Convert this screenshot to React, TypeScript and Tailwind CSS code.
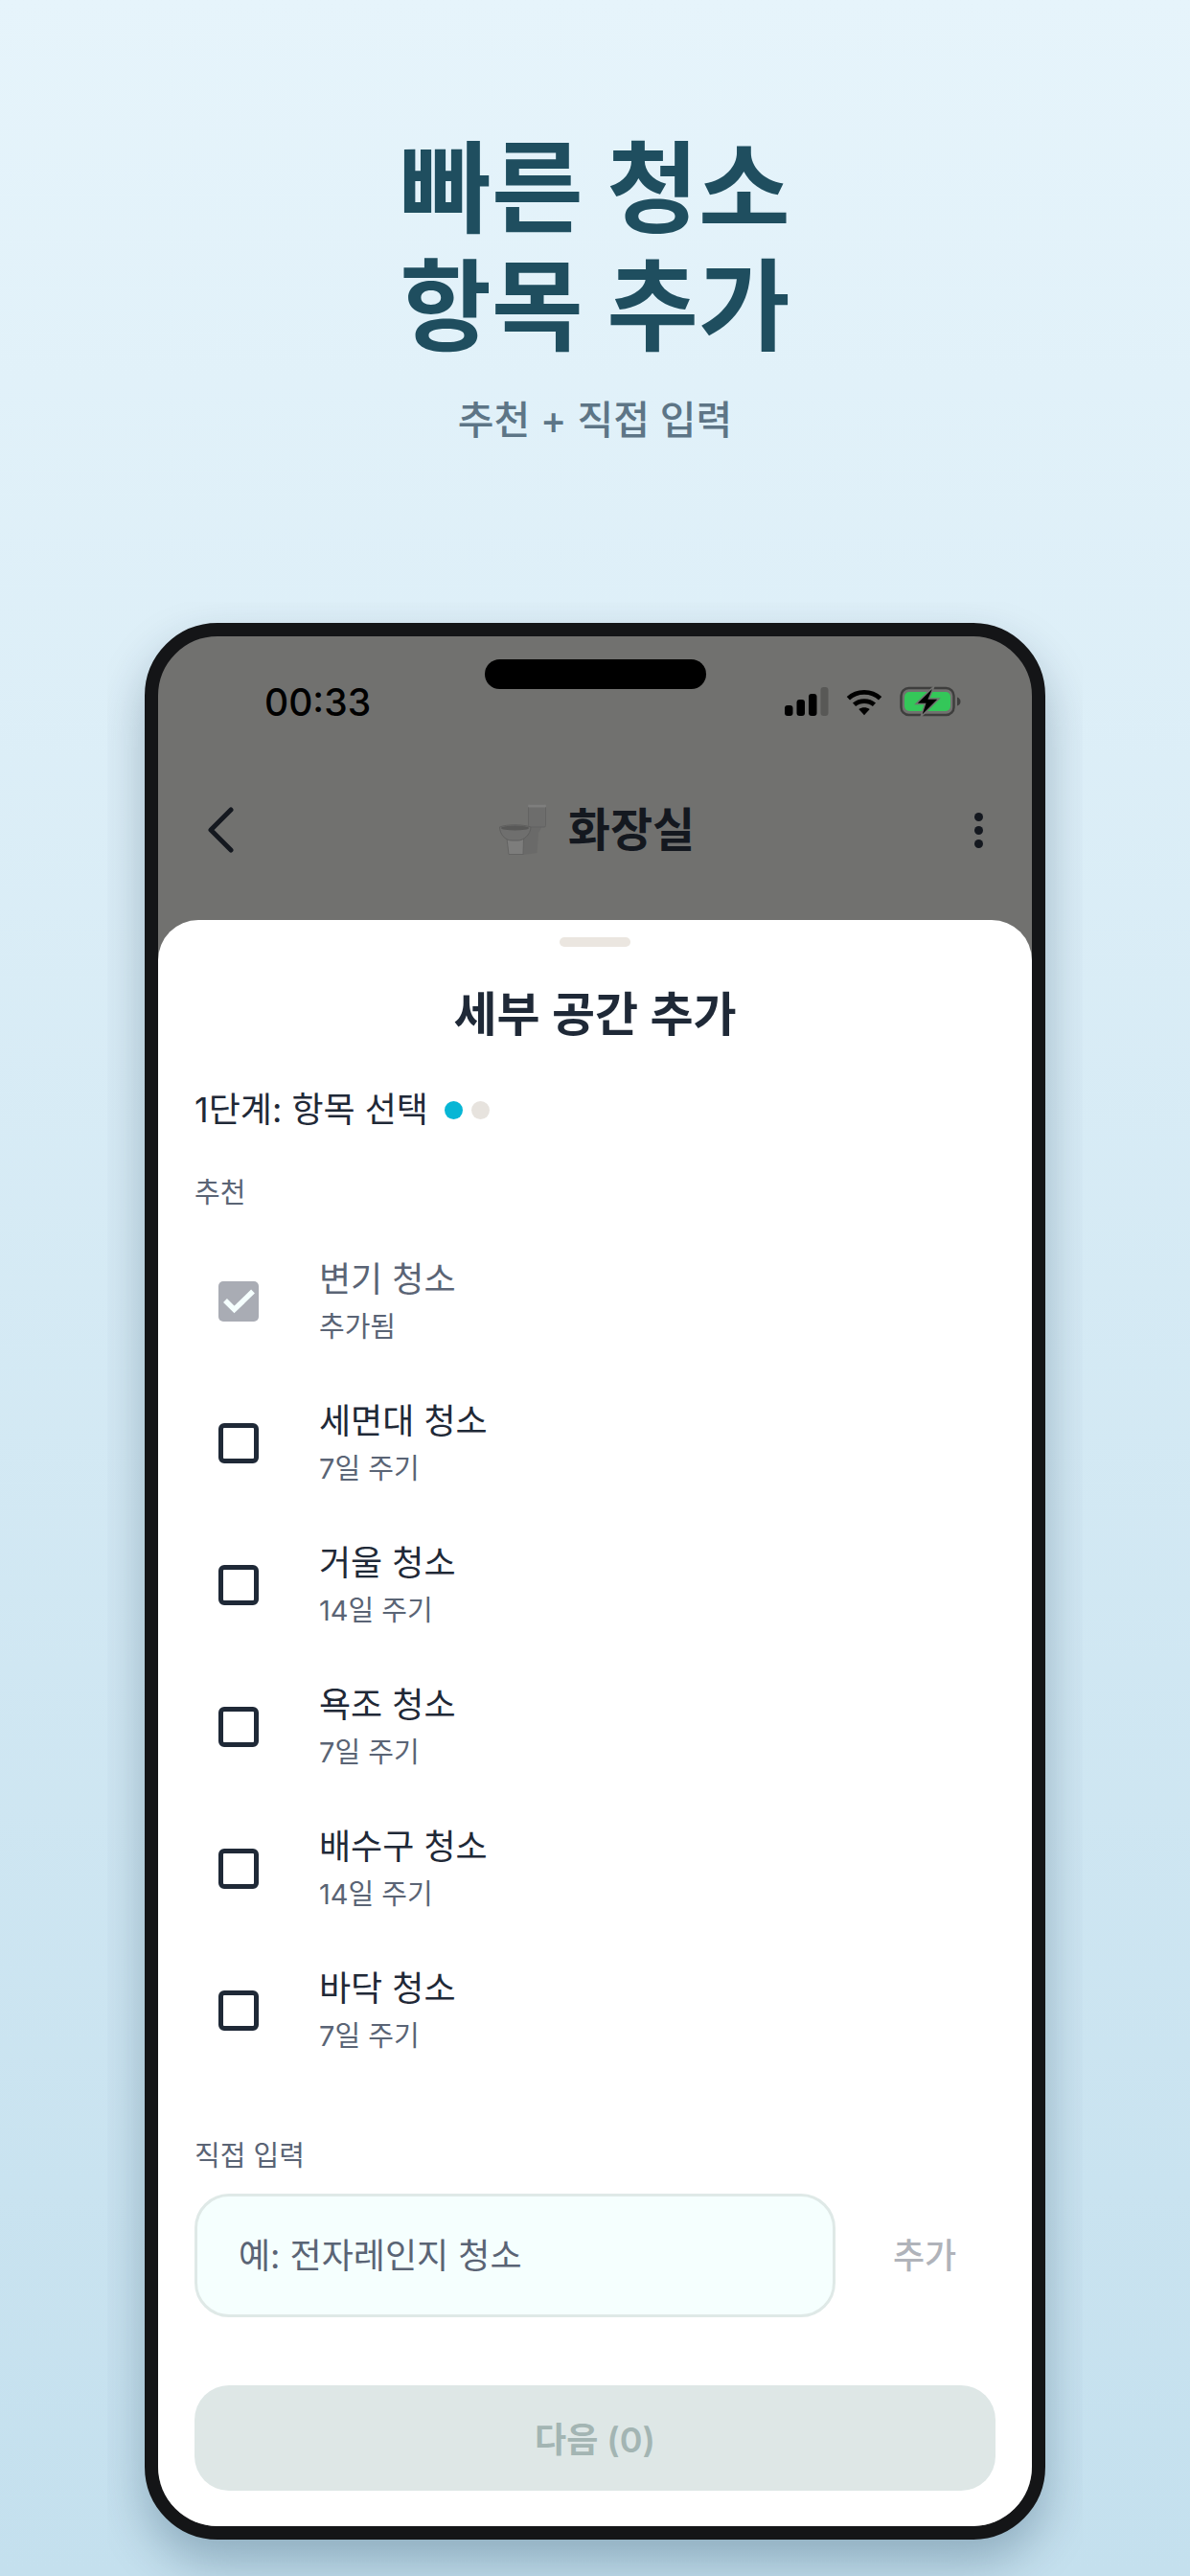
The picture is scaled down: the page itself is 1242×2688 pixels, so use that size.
const KR = "font-['Inter','Noto_Sans_CJK_KR',sans-serif]";

const items = [
  { name: '변기 청소', sub: '추가됨', added: true },
  { name: '세면대 청소', sub: '7일 주기' },
  { name: '거울 청소', sub: '14일 주기' },
  { name: '욕조 청소', sub: '7일 주기' },
  { name: '배수구 청소', sub: '14일 주기' },
  { name: '바닥 청소', sub: '7일 주기' },
];

function StatusIcons() {
  return (
    <div className="flex items-center gap-[18px]">
      <svg width="46" height="30" viewBox="0 0 46 30">
        <rect x="0" y="19" width="8.5" height="11" rx="3" fill="#000" />
        <rect x="12.5" y="13" width="8.5" height="17" rx="3" fill="#000" />
        <rect x="25" y="7" width="8.5" height="23" rx="3" fill="#000" />
        <rect x="37.5" y="0" width="8" height="30" rx="3" fill="#000" fillOpacity="0.22" />
      </svg>
      <svg width="38" height="30" viewBox="0 0 40 30" fill="none">
        <path d="M2.5 11.5C12 2.5 28 2.5 37.5 11.5" stroke="#000" strokeWidth="5" />
        <path d="M9 18.5C15 13.2 25 13.2 31 18.5" stroke="#000" strokeWidth="5" />
        <path d="M14 23.5C17.5 20.8 22.5 20.8 26 23.5L20 30Z" fill="#000" />
      </svg>
      <svg width="64" height="32" viewBox="0 0 64 32" fill="none">
        <rect x="1.5" y="2" width="55" height="28" rx="8" stroke="#000" strokeOpacity="0.45" strokeWidth="2.5" />
        <rect x="5" y="6" width="48" height="20" rx="5" fill="#34c759" />
        <path d="M60 11.5C62.5 12.5 63.5 14 63.5 16S62.5 19.5 60 20.5Z" fill="#000" fillOpacity="0.45" />
        <path d="M36 0L17 18.5H26.5L22 32L41 13H30.5Z" fill="#000" stroke="#71716f" strokeWidth="1.5" />
      </svg>
    </div>
  );
}

function ToiletEmoji() {
  return (
    <svg width="50" height="54" viewBox="0 0 50 54">
      <path d="M24 28L32 23H45L41 30L39.5 51L25 53Z" fill="#6a6a69" />
      <rect x="30.5" y="1" width="18" height="23" rx="1.5" fill="#6d6d6c" stroke="#636362" strokeWidth="1" />
      <rect x="30" y="0.5" width="19" height="3" rx="1" fill="#7e7e7d" />
      <path d="M8 36H25.5L25 52.5H10Z" fill="#7d7d7c" stroke="#636362" strokeWidth="1" />
      <path d="M0.5 24C8 21 24 21 33 24C33 32 25 38 20 38H13C6 38 0.5 31 0.5 24Z" fill="#6f6f6e" stroke="#5f5f5e" strokeWidth="1" />
      <ellipse cx="16.5" cy="25" rx="14.5" ry="2.6" fill="#585857" />
    </svg>
  );
}

function Check({ added }: { added?: boolean }) {
  if (added) {
    return (
      <div className="w-[42px] h-[42px] rounded-[5px] bg-[#a9acb4]">
        <svg width="42" height="42" viewBox="0 0 42 42" fill="none">
          <path d="M7 20L16.5 29.5L36 10.5" stroke="#f5fffe" strokeWidth="5.5" />
        </svg>
      </div>
    );
  }
  return <div className="w-[42px] h-[42px] rounded-[6px] border-[5px] border-[#1f2937]" />;
}

export default function App() {
  return (
    <div className={`w-[1242px] h-[2688px] flex flex-col items-center overflow-hidden bg-gradient-to-b from-[#e6f4fb] to-[#c4e0ee] ${KR}`}>
      <header className="h-[628px] pt-[136px] flex flex-col items-center shrink-0">
        <h1 className="text-[104px] leading-[123px] font-bold text-[#1f4e5f] text-center">
          빠른 청소
          <br />
          항목 추가
        </h1>
        <p className="mt-[26px] text-[41px] leading-[60px] font-medium text-[#5d7586]">추천 + 직접 입력</p>
      </header>

      <div className="w-[1018px] flex-1 overflow-hidden flex justify-center pt-[22px]">
        <div className="w-[940px] h-[2000px] shrink-0 rounded-[76px] border-[14px] border-[#141517] bg-[#71716f] shadow-[0_24px_50px_rgba(0,40,70,0.28)] overflow-hidden flex flex-col">
          <div className="relative h-[296px] shrink-0">
            <div className="absolute top-[24px] left-[341px] w-[231px] h-[31px] rounded-full bg-black" />
            <div className="h-[72px] mt-[32px] pl-[111px] pr-[74px] flex items-center justify-between">
              <span className="text-[39px] leading-none font-medium text-black">00:33</span>
              <StatusIcons />
            </div>
            <div className="mt-[58px] pl-[50px] pr-[40px] h-[80px] flex items-center justify-between">
              <svg width="30" height="48" viewBox="0 0 30 48" fill="none">
                <path d="M26 3L5 24L26 45" stroke="#14181f" strokeWidth="5" strokeLinecap="round" strokeLinejoin="round" />
              </svg>
              <div className="mr-[6px] flex items-center gap-[22px]">
                <ToiletEmoji />
                <span className="text-[48px] leading-none font-semibold text-[#14181f]">화장실</span>
              </div>
              <div className="w-[30px] flex flex-col items-center gap-[5px]">
                <i className="w-[9px] h-[9px] rounded-full bg-[#14181f]" />
                <i className="w-[9px] h-[9px] rounded-full bg-[#14181f]" />
                <i className="w-[9px] h-[9px] rounded-full bg-[#14181f]" />
              </div>
            </div>
          </div>

          <div className="flex-1 bg-white rounded-t-[42px] px-[38px] flex flex-col">
            <div className="mt-[18px] mx-auto w-[74px] h-[10px] rounded-full bg-[#ebe6e0] shrink-0" />
            <h2 className="mt-[41px] h-[60px] leading-[60px] text-[49px] font-semibold text-[#1f2937] text-center">세부 공간 추가</h2>
            <div className="mt-[39px] h-[60px] flex items-center gap-[17px]">
              <span className="text-[36px] leading-[60px] text-[#1f2937]">1단계: 항목 선택</span>
              <div className="flex gap-[9px]">
                <i className="w-[19px] h-[19px] rounded-full bg-[#07b6d5]" />
                <i className="w-[19px] h-[19px] rounded-full bg-[#e7e3de]" />
              </div>
            </div>
            <p className="mt-[37px] h-[40px] leading-[40px] text-[29px] text-[#5a6475]">추천</p>
            <ul className="mt-[19px]">
              {items.map((item) => (
                <li key={item.name} className="h-[148px] pl-[25px] flex items-center gap-[63px]">
                  <Check added={item.added} />
                  <div className="flex flex-col">
                    <span className={`text-[36px] leading-[52px] ${item.added ? 'text-[#5a6475]' : 'text-[#1f2937]'}`}>{item.name}</span>
                    <span className="text-[29px] leading-[46px] pt-[1px] text-[#5a6475]">{item.sub}</span>
                  </div>
                </li>
              ))}
            </ul>
            <p className="mt-[58px] h-[40px] leading-[40px] text-[29px] text-[#5a6475]">직접 입력</p>
            <div className="mt-[19px] flex items-center">
              <div className="w-[669px] h-[129px] rounded-[36px] border-[3px] border-[#dfe9e7] bg-[#f5fffe] pl-[43px] flex items-center text-[36px] text-[#5a6475]">
                예: 전자레인지 청소
              </div>
              <span className="ml-[60px] text-[36px] font-medium text-[#b0b3ba]">추가</span>
            </div>
            <button className="mt-[71px] w-full h-[110px] pt-[3px] rounded-[36px] bg-[#dee7e6] text-[36px] font-semibold text-[#a3b5b3]">다음 (0)</button>
          </div>
        </div>
      </div>
    </div>
  );
}
